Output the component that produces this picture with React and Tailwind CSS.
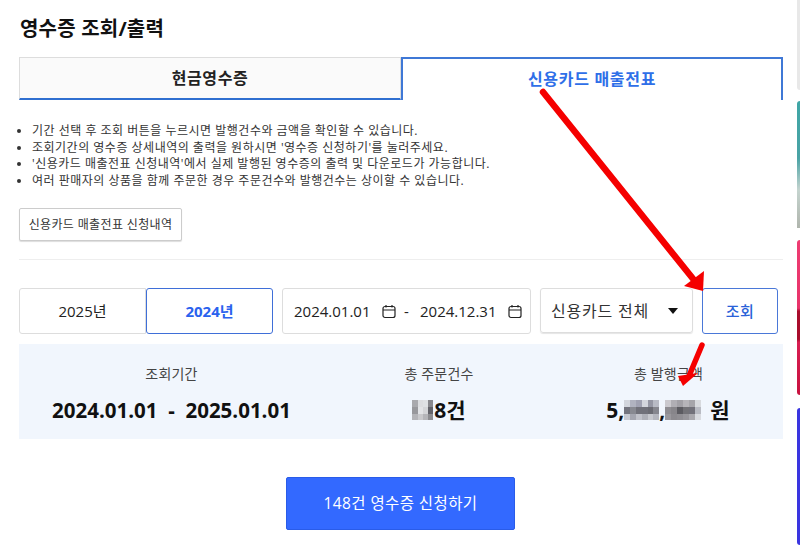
const font = "font-['Open_Sans','Noto_Sans_CJK_KR',sans-serif]";

function CalendarIcon() {
  return (
    <svg width="14" height="15" viewBox="0 0 14 15" fill="none" stroke="#222" strokeWidth="1.2">
      <rect x="1" y="2.5" width="12" height="11" rx="2" />
      <path d="M1 6h12M4 1v2.5M10 1v2.5" />
    </svg>
  );
}

function Mosaic({ cells, cols, className }) {
  return (
    <span className={`grid ${className}`} style={{ gridTemplateColumns: `repeat(${cols}, 1fr)` }}>
      {cells.map((c, i) => (
        <span key={i} style={{ backgroundColor: c }} />
      ))}
    </span>
  );
}

const notes = [
  "기간 선택 후 조회 버튼을 누르시면 발행건수와 금액을 확인할 수 있습니다.",
  "조회기간의 영수증 상세내역의 출력을 원하시면 '영수증 신청하기'를 눌러주세요.",
  "'신용카드 매출전표 신청내역'에서 실제 발행된 영수증의 출력 및 다운로드가 가능합니다.",
  "여러 판매자의 상품을 함께 주문한 경우 주문건수와 발행건수는 상이할 수 있습니다.",
];

export default function App() {
  return (
    <div className={`relative w-[800px] h-[553px] overflow-hidden bg-white ${font}`}>
      <div className="w-[764px] ml-[19px]">
        <h1 className="h-[57px] pt-[15px] pl-px text-[20px] leading-[28px] font-bold text-[#111] tracking-[0.2px]">영수증 조회/출력</h1>
        <div className="flex h-[43px]">
          <div className="w-[382px] pb-px bg-[#fafafa] border border-[#ddd] border-b-2 border-b-[#2f6fd0] flex items-center justify-center text-[16px] font-bold text-[#222] tracking-[0.6px]">현금영수증</div>
          <div className="w-[382px] pb-px border-2 border-b-0 border-[#3f78d6] flex items-center justify-center text-[16px] font-bold text-[#2f6fe8] tracking-[0.7px]">신용카드 매출전표</div>
        </div>
        <ul className="mt-[23px] text-[12px] leading-[16.6px] text-[#333] list-disc pl-[13px] tracking-[0.5px]">
          {notes.map((n) => <li key={n}>{n}</li>)}
        </ul>
        <button className="mt-[19px] h-[33px] w-[163px] rounded-[2px] border border-[#ccc] text-[12px] text-[#333] bg-white shadow-[0_1px_1px_#ddd] tracking-[0.35px]">신용카드 매출전표 신청내역</button>
        <div className="mt-[18px] border-t border-[#eee]" />
        <div className="mt-[28px] flex h-[46px]">
          <button className="w-[127px] rounded-l-[3px] border border-[#ddd] text-[15px] text-[#222]">2025년</button>
          <button className="w-[127px] rounded-[3px] border border-[#3f6fd8] text-[15px] font-bold text-[#2a62ee]">2024년</button>
          <div className="ml-[9px] w-[249px] rounded-[3px] border border-[#ddd] flex items-center pl-[11px] text-[15px] text-[#222]">
            <span className="w-[76px] whitespace-nowrap">2024.01.01</span>
            <span className="ml-[12px]"><CalendarIcon /></span>
            <span className="ml-[8px] w-[16px]">-</span>
            <span className="w-[76px] whitespace-nowrap">2024.12.31</span>
            <span className="ml-[12px]"><CalendarIcon /></span>
          </div>
          <div className="ml-[9px] w-[153px] h-[45px] rounded-[3px] border border-[#ddd] shadow-[0_1px_1px_#e5e5e5] flex items-center justify-between pl-[10px] pr-[14px] text-[16px] text-[#333] tracking-[0.8px]">
            <span>신용카드 전체</span>
            <span className="w-0 h-0 border-x-[5.5px] border-x-transparent border-t-[6px] border-t-[#111]" />
          </div>
          <button className="ml-[9px] w-[76px] rounded-[3px] border border-[#4a78d8] text-[15px] font-medium text-[#2a62d8] tracking-[0.5px]">조회</button>
        </div>
        <div className="mt-[10px] h-[95px] bg-[#f1f6fd] grid grid-cols-[305px_230px_229px] text-center">
          <div className="pt-[20px]">
            <p className="text-[14px] leading-[20px] text-[#444] tracking-[0.2px]">조회기간</p>
            <p className="mt-[11px] text-[20.5px] leading-[30px] font-bold text-[#111] whitespace-pre">2024.01.01  -  2025.01.01</p>
          </div>
          <div className="pt-[20px]">
            <p className="text-[14px] leading-[20px] text-[#444] tracking-[0.2px]">총 주문건수</p>
            <p className="mt-[11px] text-[21px] leading-[30px] font-bold text-[#111] flex items-center justify-center">
              <Mosaic cols={4} className="w-[21px] h-[20px] mr-[1px]" cells={["#a9a9ad","#dcdde0","#dfe1e4","#88888d","#98989c","#e2e3e6","#d4d5d8","#63636a","#b4b4b8","#c9c9cc","#b5b5b9","#8d8d91"]} />
              <span>8건</span>
            </p>
          </div>
          <div className="pt-[20px]">
            <p className="text-[14px] leading-[20px] text-[#444] tracking-[0.2px]">총 발행금액</p>
            <p className="mt-[11px] text-[21px] leading-[30px] font-bold text-[#111] whitespace-nowrap flex items-center justify-center pr-[1px]">
              <span>5,</span>
              <Mosaic cols={6} className="w-[35px] h-[20px]" cells={["#d3d6dd","#b0b3c0","#a0a2b2","#d3d6dd","#9597a4","#b8bbc5","#74757f","#878991","#70717a","#70717a","#6a6b73","#85868e","#c8cad2","#a4a6b0","#c0c2ca","#aeb0b8","#c6c8ce","#b4b6be"]} />
              <span>,</span>
              <Mosaic cols={6} className="w-[36px] h-[20px] mr-[9px]" cells={["#cbc9ce","#b0aeb4","#a2a0a6","#b6b4b9","#a6a5aa","#d8dade","#8f8d92","#87858a","#5c5b61","#737277","#72717a","#b9bbc3","#9a989d","#8c8a8f","#908e93","#98969b","#a9a8ad","#d9dbe0"]} />
              <span>원</span>
            </p>
          </div>
        </div>
        <div className="mt-[38px] flex justify-center pr-[1px]">
          <button className="w-[229px] h-[53px] rounded-[2px] bg-[#3369ff] border border-[#2a5ce8] text-[15.5px] text-white tracking-[0.4px]">148건 영수증 신청하기</button>
        </div>
      </div>

      <div className="absolute right-0 top-0 w-[3px] h-[90px] bg-[#e8e8e8] rounded-bl-[3px]" />
      <div className="absolute right-0 top-[101px] w-[3px] h-[127px] bg-[linear-gradient(180deg,#3fa6a6_0%,#4aa3a5_45%,#c5d4cf_70%,#b0b5ad_100%)] rounded-tl-[3px]" />
      <div className="absolute right-0 top-[240px] w-[3px] h-[155px] bg-[linear-gradient(180deg,#ee3c72_0%,#e8336a_44%,#a80d2c_46%,#a80d2c_64%,#d81e52_66%,#c8123f_100%)] rounded-l-[3px]" />
      <div className="absolute right-0 top-[408px] w-[3px] h-[137px] bg-[#3a35e0] rounded-l-[3px]" />

      <svg className="absolute inset-0 pointer-events-none" width="800" height="553" viewBox="0 0 800 553">
        <line x1="543" y1="92" x2="694" y2="280" stroke="#f50000" strokeWidth="6.5" strokeLinecap="round" />
        <polygon points="684,286 704,271 703,291" fill="#f50000" />
        <line x1="702" y1="345" x2="689" y2="376" stroke="#f50000" strokeWidth="5.5" strokeLinecap="round" />
        <polygon points="678,376 698,373 683,386" fill="#f50000" />
      </svg>
    </div>
  );
}
